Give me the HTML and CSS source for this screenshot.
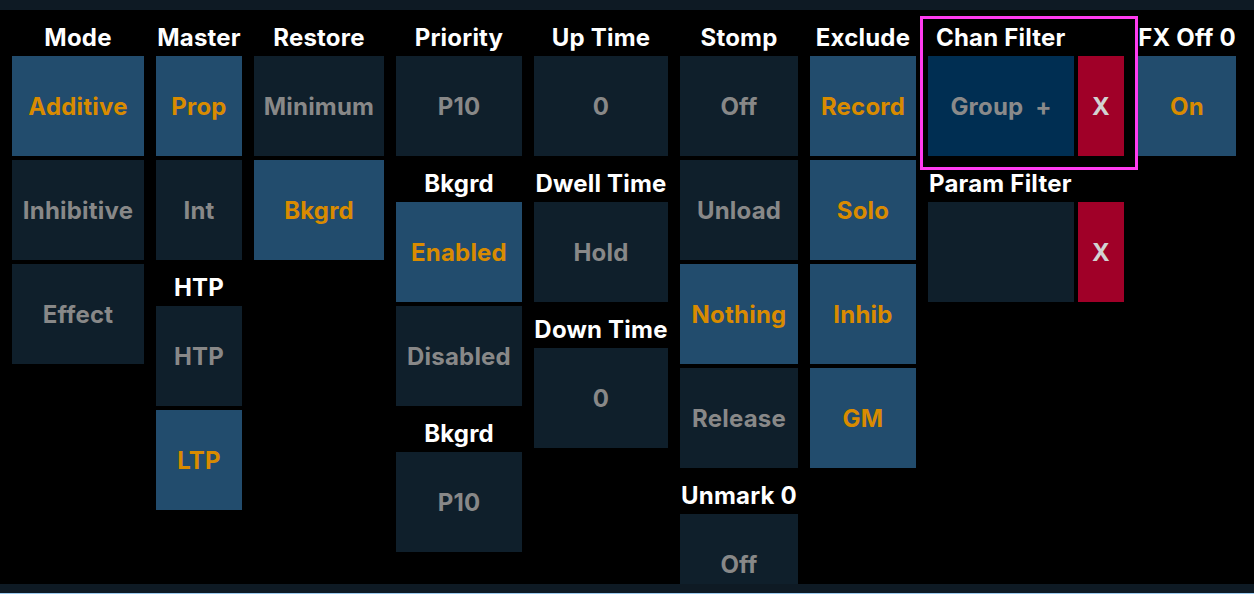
FILE: index.html
```html
<!DOCTYPE html>
<html lang="en">
<head>
  <meta charset="UTF-8" />
  <title>Effect Properties</title>
  <link rel="stylesheet" href="styles.css">
</head>
<body>
  <div class="app">
    <div class="topbar"></div>

    <div class="board">
      <div class="col col-mode">
        <div class="label">Mode</div>
        <div class="btn on">Additive</div>
        <div class="btn">Inhibitive</div>
        <div class="btn">Effect</div>
      </div>

      <div class="col col-master">
        <div class="label">Master</div>
        <div class="btn on">Prop</div>
        <div class="btn">Int</div>
        <div class="label">HTP</div>
        <div class="btn">HTP</div>
        <div class="btn on">LTP</div>
      </div>

      <div class="col col-restore">
        <div class="label">Restore</div>
        <div class="btn">Minimum</div>
        <div class="btn on">Bkgrd</div>
      </div>

      <div class="col col-priority">
        <div class="label">Priority</div>
        <div class="btn">P10</div>
        <div class="label">Bkgrd</div>
        <div class="btn on">Enabled</div>
        <div class="btn">Disabled</div>
        <div class="label">Bkgrd</div>
        <div class="btn">P10</div>
      </div>

      <div class="col col-time">
        <div class="label">Up Time</div>
        <div class="btn">0</div>
        <div class="label">Dwell Time</div>
        <div class="btn">Hold</div>
        <div class="label">Down Time</div>
        <div class="btn">0</div>
      </div>

      <div class="col col-stomp">
        <div class="label">Stomp</div>
        <div class="btn">Off</div>
        <div class="btn">Unload</div>
        <div class="btn on">Nothing</div>
        <div class="btn">Release</div>
        <div class="label">Unmark 0</div>
        <div class="btn">Off</div>
      </div>

      <div class="col col-exclude">
        <div class="label">Exclude</div>
        <div class="btn on">Record</div>
        <div class="btn on">Solo</div>
        <div class="btn on">Inhib</div>
        <div class="btn on">GM</div>
      </div>

      <div class="col col-filter">
        <div class="filter-group highlighted">
          <div class="label label-left chan">Chan Filter</div>
          <div class="filter-row">
            <div class="btn picked">Group&nbsp;&nbsp;+</div>
            <div class="btn clear">X</div>
          </div>
        </div>
        <div class="label label-left">Param Filter</div>
        <div class="filter-row">
          <div class="btn"></div>
          <div class="btn clear">X</div>
        </div>
      </div>

      <div class="col col-fx">
        <div class="label">FX Off 0</div>
        <div class="btn on">On</div>
      </div>
    </div>

    <div class="bottombar"></div>
  </div>
</body>
</html>
```

FILE: styles.css
```css
body {
  margin: 0;
  background: #000;
  font-family: Inter, "Liberation Sans", sans-serif;
  font-weight: 700;
  overflow: hidden;
}
.app {
  height: 594px;
  display: flex;
  flex-direction: column;
}
.topbar {
  height: 10px;
  background: #0e1a24;
}
.bottombar {
  height: 9px;
  background: #0e1a24;
  border-bottom: 1px solid #9ccbf0;
}
.board {
  flex: 1;
  overflow: hidden;
  display: flex;
  align-items: flex-start;
  gap: 12px;
  padding-left: 12px;
}
.col {
  display: flex;
  flex-direction: column;
}
.col-mode { width: 132px; }
.col-master { width: 86px; }
.col-restore { width: 130px; }
.col-priority { width: 126px; }
.col-time { width: 134px; }
.col-stomp { width: 118px; }
.col-exclude { width: 106px; }
.col-filter { width: 196px; }
.col-fx { width: 98px; margin-left: 2px; }

.label {
  height: 28px;
  padding: 14px 0 4px;
  line-height: 28px;
  font-size: 24px;
  letter-spacing: 0.2px;
  color: #fff;
  text-align: center;
  white-space: nowrap;
}
.label-left {
  text-align: left;
  padding-left: 1px;
}
.label-left.chan {
  padding-left: 8px;
}

.btn {
  height: 100px;
  display: flex;
  align-items: center;
  justify-content: center;
  background: #0f1f2b;
  color: #888;
  font-size: 24px;
  letter-spacing: 0.2px;
  white-space: nowrap;
}
.btn + .btn {
  margin-top: 4px;
}
.btn.on {
  background: #224c6d;
  color: #d98b00;
}

.filter-row {
  display: flex;
  gap: 4px;
}
.filter-row .btn {
  flex: 1;
  margin-top: 0;
}
.filter-row .btn.clear {
  flex: 0 0 46px;
  background: #a00028;
  color: #d2d2d2;
}
.btn.picked {
  background: #002e52;
  color: #8a8a8a;
}

.filter-group {
  position: relative;
}
.highlighted::after {
  content: "";
  position: absolute;
  top: 6px;
  left: -8px;
  right: -14px;
  bottom: -14px;
  border: 3px solid #ff3cf0;
  pointer-events: none;
}
```
